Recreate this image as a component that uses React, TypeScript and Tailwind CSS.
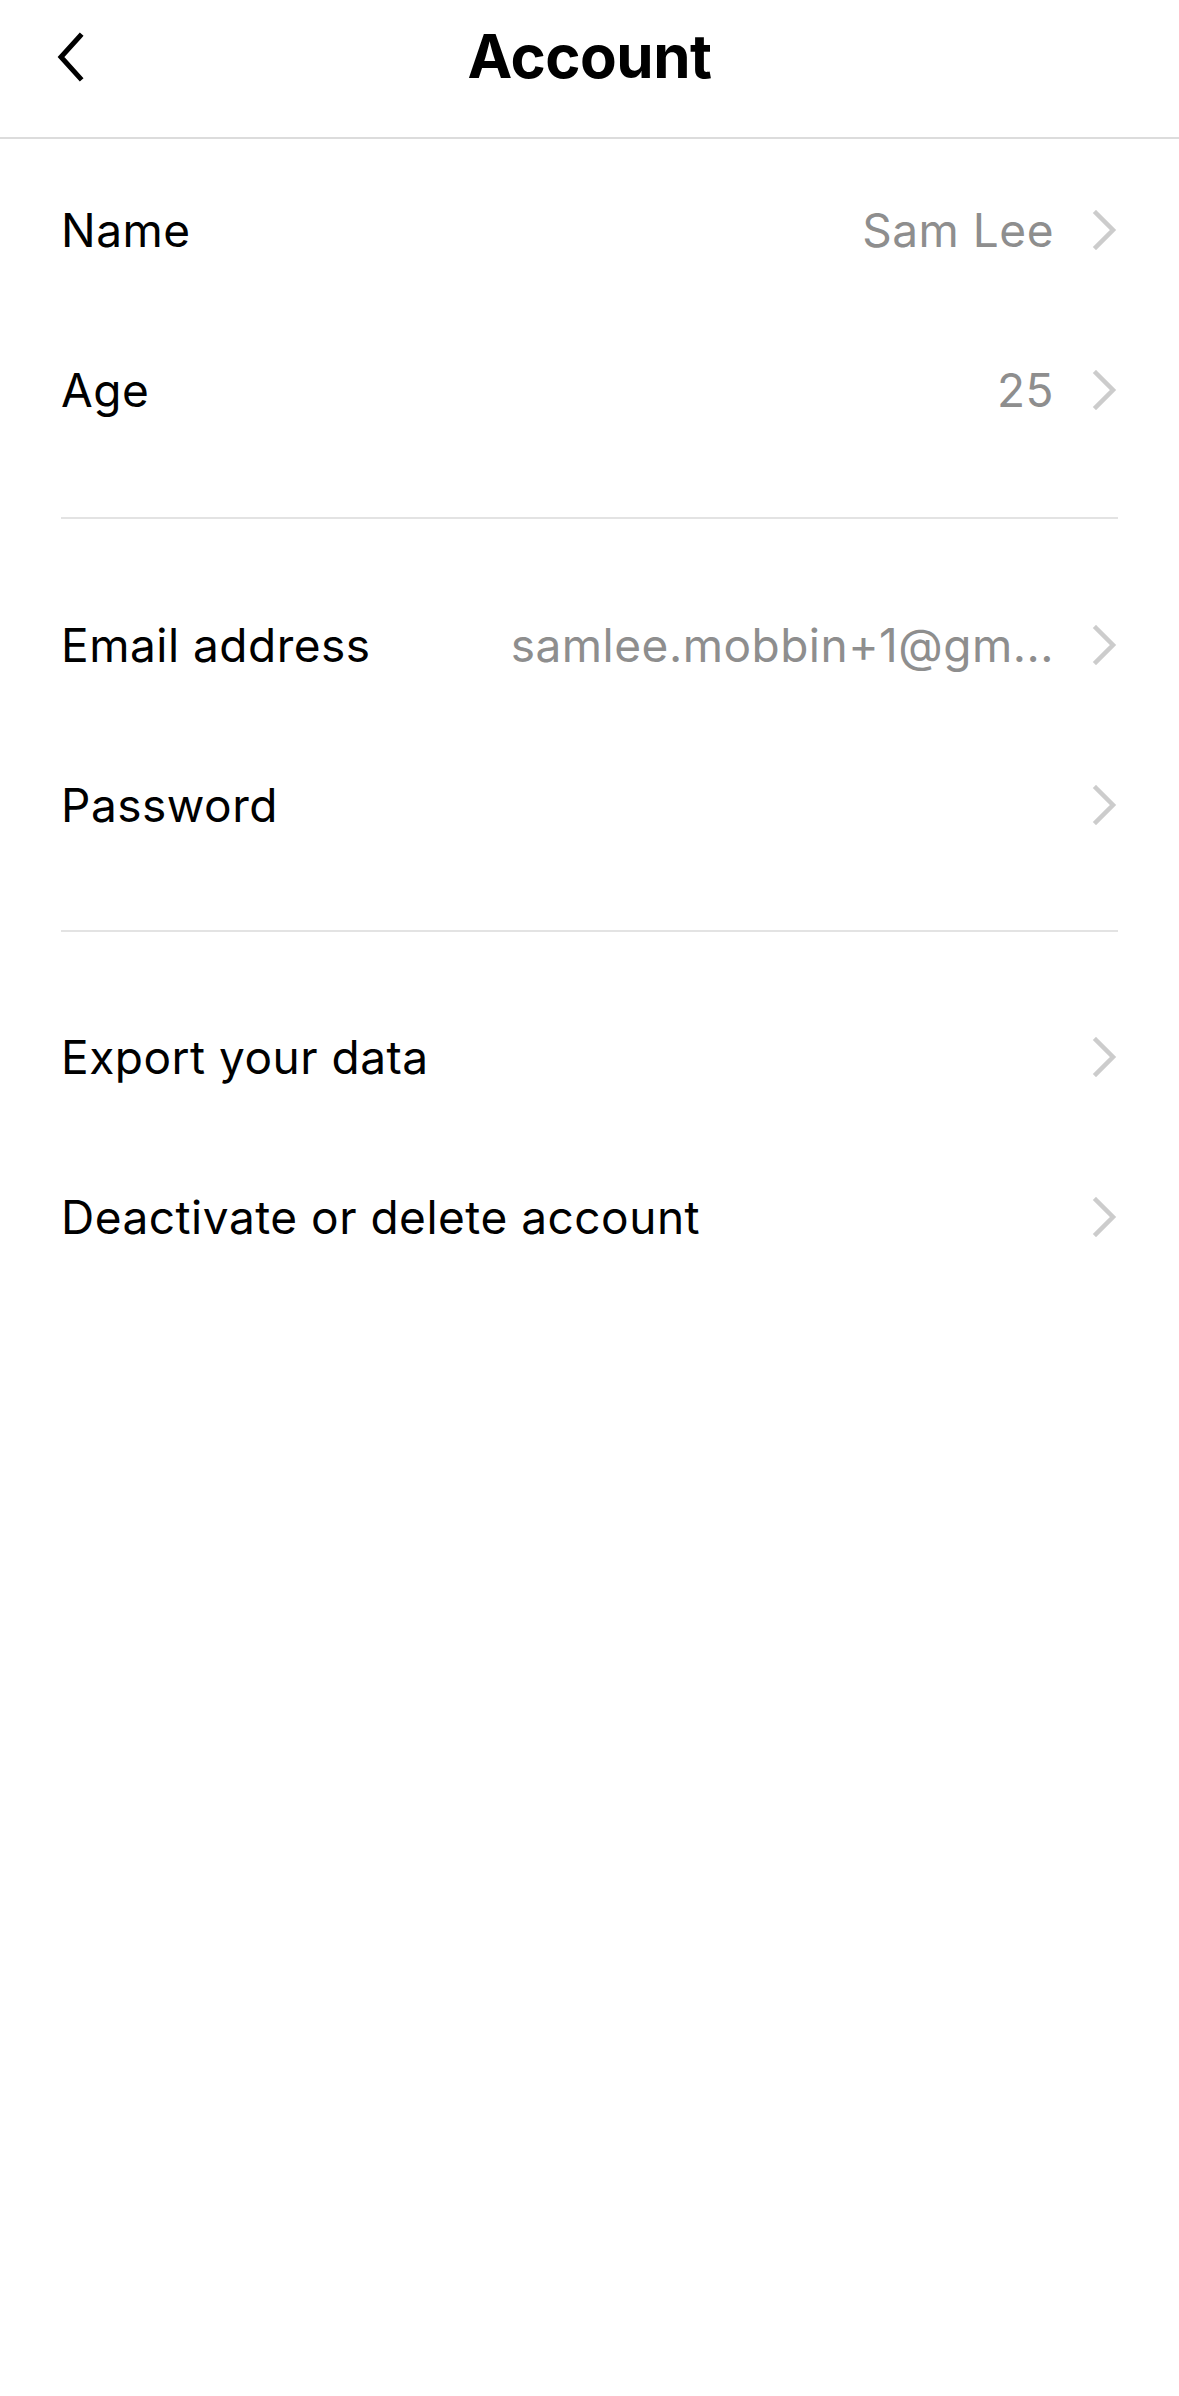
import React from "react";

function Chevron() {
  return (
    <svg width="26" height="40" viewBox="0 0 26 40" className="shrink-0">
      <path d="M4 3 L21 20 L4 37" fill="none" stroke="#cccccc" strokeWidth="4.5" strokeLinecap="square" strokeLinejoin="miter" />
    </svg>
  );
}

function Row({ label, value }: { label: string; value?: string }) {
  return (
    <div className="flex h-[160px] items-center">
      <span className="shrink-0 whitespace-nowrap text-[46px] tracking-[0.5px] text-black">{label}</span>
      <div className="ml-[60px] flex min-w-0 flex-1 items-center justify-end">
        {value ? (
          <span className="whitespace-nowrap text-[46px] tracking-[0.5px] text-[#8e8e8e]">{value}</span>
        ) : null}
        <div className="ml-[38px] flex shrink-0 items-center">
          <Chevron />
        </div>
      </div>
    </div>
  );
}

export default function App() {
  return (
    <div
      className="min-h-[2396px] w-[1179px] bg-white"
      style={{ fontFamily: "Inter, 'Liberation Sans', sans-serif" }}
    >
      <header className="relative flex h-[139px] items-center justify-center border-b-2 border-[#dcdcdc]">
        <button className="absolute left-[50px] top-[28px] flex h-[58px] w-[40px] items-center justify-center">
          <svg width="34" height="52" viewBox="0 0 34 52">
            <path d="M27 5 L8 26 L27 47" fill="none" stroke="#000" strokeWidth="5" strokeLinecap="square" />
          </svg>
        </button>
        <h1 className="-mt-[26px] text-[60px] font-bold tracking-[-0.5px] text-black">Account</h1>
      </header>
      <div className="px-[61px]">
        <section className="pb-[47px] pt-[11px]">
          <Row label="Name" value="Sam Lee" />
          <Row label="Age" value="25" />
        </section>
        <div className="h-[2px] bg-[#e3e3e3]" />
        <section className="pb-[45px] pt-[46px]">
          <Row label="Email address" value="samlee.mobbin+1@gm..." />
          <Row label="Password" />
        </section>
        <div className="h-[2px] bg-[#e3e3e3]" />
        <section className="pt-[45px]">
          <Row label="Export your data" />
          <Row label="Deactivate or delete account" />
        </section>
      </div>
    </div>
  );
}
